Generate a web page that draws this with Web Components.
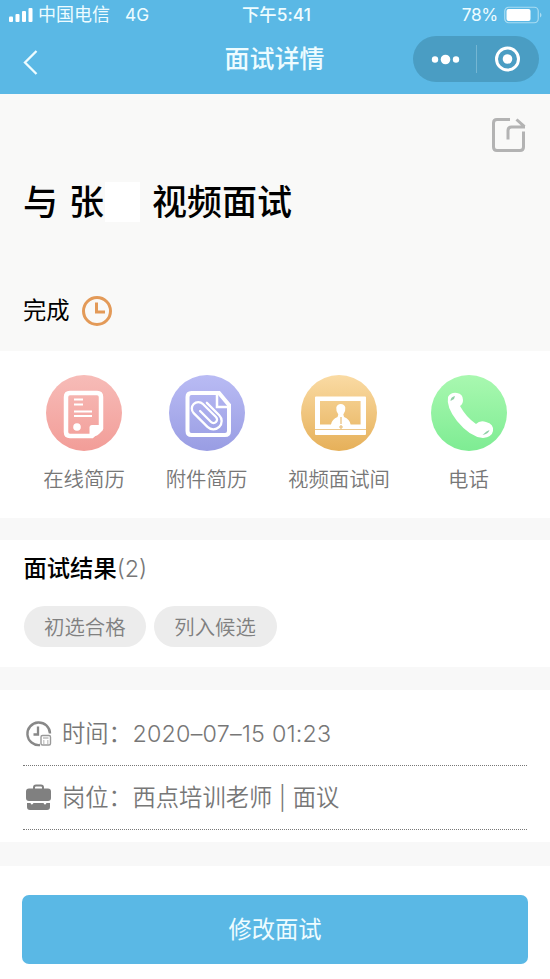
<!DOCTYPE html>
<html lang="zh-CN">
<head>
<meta charset="utf-8">
<title>面试详情</title>
<style>
html,body{margin:0;padding:0}
body{width:550px;height:979px;overflow:hidden;background:#fff;font-family:Inter,"Noto Sans CJK SC",sans-serif;color:#000}
</style>
</head>
<body>
<interview-page></interview-page>
<script>
function define(name, html) {
  const t = document.createElement('template');
  t.innerHTML = html;
  customElements.define(name, class extends HTMLElement {
    constructor() {
      super();
      this.attachShadow({mode: 'open'}).append(t.content.cloneNode(true));
    }
  });
}

define('status-bar', `
<style>
:host{display:grid;grid-template-columns:1fr auto 1fr;align-items:center;height:30px;padding:0 8px 0 8px;color:#eefcff;font-size:17.3px;line-height:30px;box-sizing:border-box}
svg{display:block}
.l,.r{display:flex;align-items:center}
.r{justify-content:flex-end;gap:6px}
.l span:nth-of-type(1){margin-left:5px;font-size:18px}
.l span:nth-of-type(2){margin-left:15px}
.r span{letter-spacing:-.3px}
.c{font-weight:500;padding-left:3px;letter-spacing:0.1px}
</style>
<div class="l">
<svg width="25" height="16" viewBox="0 0 25 16" fill="#fff"><rect x="1" y="9.500" width="4" height="5.500" rx="1"/><rect x="7.500" y="7" width="4" height="8" rx="1"/><rect x="14" y="4" width="4" height="11" rx="1"/><rect x="20.500" y="1" width="4" height="14" rx="1"/></svg>
<span>中国电信</span><span>4G</span></div>
<div class="c">下午5:41</div>
<div class="r"><span>78%</span>
<svg width="38" height="18" viewBox="0 0 38 18"><rect x=".75" y="1.250" width="33.500" height="15.500" rx="4" fill="none" stroke="#a9dcf2" stroke-width="1.200"/><rect x="2.500" y="3" width="24" height="12" rx="2" fill="#fff"/><path d="M36 6.500v5q1.500-1 1.500-2.500t-1.500-2.500" fill="#a9dcf2"/></svg></div>`);

define('nav-bar', `
<style>
:host{display:grid;grid-template-columns:1fr auto 1fr;align-items:center;height:64px;padding:0 11px 0 21px;color:#eefcff;box-sizing:border-box}
svg{display:block}
h1{margin:0;font-size:25px;line-height:36px;font-weight:500;padding-bottom:6px;margin-right:11px}
.back{margin-top:-1px}
.cap{justify-self:end;margin-top:-6px;width:126px;height:46px;border-radius:23px;background:#4a9dc3}
</style>
<svg class="back" width="20" height="28" viewBox="0 0 20 28"><path d="M15.500 3 4 14.500 15.500 26" fill="none" stroke="#eefcff" stroke-width="2.300"/></svg>
<h1><slot></slot></h1>
<div class="cap"><svg width="126" height="46" viewBox="0 0 126 46" fill="#fff"><circle cx="22" cy="23.500" r="3.200"/><circle cx="32.500" cy="23.500" r="4.800"/><circle cx="43" cy="23.500" r="3.200"/><path d="M63.500 9v28" stroke="#74b6d3"/><circle cx="94.500" cy="23" r="11" fill="none" stroke="#fff" stroke-width="3"/><circle cx="94.500" cy="23" r="4.800"/></svg></div>`);

define('interview-summary', `
<style>
:host{display:flex;flex-direction:column;height:257px;background:#f9f9f8;box-sizing:border-box;padding:22px 23px 0}
svg{display:block}
.share{align-self:flex-end}
.head{display:flex;align-items:center;height:50px;margin-top:23px;font-size:35px;font-weight:500;line-height:50px}
.mask{width:35px;height:40px;background:#fff;margin-right:12px;margin-left:1px}
.gap{width:11px}
.state{display:flex;align-items:center;gap:11px;margin-top:66px;height:36px;font-size:23.300px;line-height:36px}
</style>
<svg class="share" width="38" height="38" viewBox="0 0 38 38" fill="none" stroke="#b3b3b3" stroke-width="3"><path d="M21 3.500H8Q4.500 3.500 4.500 7v24q0 3.500 3.500 3.500h23q3.500 0 3.500-3.500V15.500M19 23.500v-9q0-3.500 3.500-3.500H36M27.500 3.500l8 7.200"/></svg>
<div class="head"><span>与</span><span class="gap"></span><span>张</span><span class="mask"></span><span>视频面试</span></div>
<div class="state"><span>完成</span><svg width="32" height="32" viewBox="0 0 32 32" fill="none"><circle cx="16" cy="16" r="13.500" stroke="#e39a58" stroke-width="3"/><path d="M15.500 7.500v9.500h8.500" stroke="#e39a58" stroke-width="3"/></svg></div>`);

define('quick-action', `
<style>
:host{display:flex;flex-direction:column;align-items:center;color:#777;font-size:20.400px;line-height:30px;font-weight:350}
.disc{width:76px;height:76px;border-radius:50%;background:var(--disc)}
.label{margin-top:14px;white-space:nowrap}
</style>
<div class="disc"><slot name="icon"></slot></div><div class="label"><slot></slot></div>`);

define('quick-actions', `
<style>
:host{display:grid;grid-template-columns:122px 123px 142px 117px;height:167px;box-sizing:border-box;padding:23.500px 23px 0;background:#fff}
svg{display:block}
</style>
<quick-action style="--disc:linear-gradient(#f7bcb8,#f29d98)"><svg slot="icon" width="76" height="76" viewBox="0 0 76 76"><path d="M24 18h27q4 0 4 4v31l-9 8H24q-4 0-4-4V22q0-4 4-4Z" fill="none" stroke="#fff" stroke-width="4.500"/><path d="M55 50h-9q-2.500 0-2.500 2.500v8.500h5.500q2 0 4-2t4-4Z" fill="#fff"/><path d="M28 24.500h9M28 29.500h9M28 36.500h18M28 41h18" stroke="#fff" stroke-width="2"/><circle cx="31" cy="52" r="3.800" fill="#fff"/></svg>在线简历</quick-action>
<quick-action style="--disc:linear-gradient(#b9bbf4,#999de3)"><svg slot="icon" width="76" height="76" viewBox="0 0 76 76" fill="none" stroke="#fff"><path d="M22.500 18H50l10 12v26q0 4-4 4H22.500q-4 0-4-4V22q0-4 4-4Z" stroke-width="4"/><path d="M48 18v14h12" stroke-width="2.500"/><path transform="translate(38.500 38.500) rotate(-45)" d="M-3.500-7V8.500a3.500 3.500 0 0 0 7 0V-10a6.500 6.500 0 0 0-13 0V9.500a8.300 8.300 0 0 0 16.600 0V-8" stroke-width="2.300" stroke-linecap="round"/></svg>附件简历</quick-action>
<quick-action style="--disc:linear-gradient(#fadba4,#e6b059)"><svg slot="icon" width="76" height="76" viewBox="0 0 76 76"><path fill-rule="evenodd" d="M15 21.500h49q1 0 1 1V59q0 1-1 1H15q-1 0-1-1V22.500q0-1 1-1ZM19 26v23.500h11q1-5.500 6.500-7.500l.8-2.500q-2.500-3-2-7 .8-3.500 4.500-3.500t4.500 3.500q.5 4-2 7l.8 2.500q5.500 2 6.500 7.500h10V26Z" fill="#fff"/><path d="M14 54.500h51" stroke="#edc98d"/><path d="M40 42v7M38 52h4M40 50v4" stroke="#e8bd76" stroke-width="1.200"/></svg>视频面试间</quick-action>
<quick-action style="--disc:linear-gradient(#a9f8b0,#7eec93)"><svg slot="icon" width="76" height="76" viewBox="0 0 76 76"><path d="M17 22Q20 17 26 18q6 1 6 7 0 4-3 6 6 11 16 18 4-4 10-2 8 2 7 9-1 6-10 7-13-1-26-17Q15 32 17 22Z" fill="#fff"/><path d="M19.500 26q0-4 4.500-5l-1 3ZM51.500 60l4-3.500 3-1.500q-1 4-7 5Z" fill="#8ecfa5"/></svg>电话</quick-action>`);

define('result-tag', `
<style>:host{display:flex;align-items:center;height:41px;box-sizing:border-box;padding:0 20.600px;border-radius:21px;background:#ececec;color:#808080;font-size:20.400px;font-weight:350;line-height:41px}span{padding-top:1px}</style><span><slot></slot></span>`);

define('interview-result', `
<style>
:host{display:block;height:127px;box-sizing:border-box;padding:11px 23.500px 0;background:#fff}
.h{font-size:23.300px;line-height:36px;font-weight:500}
.n{font-weight:300;color:#777}
.tags{display:flex;gap:7.500px;margin-top:19px}
</style>
<div class="h">面试结果<span class="n">(2)</span></div>
<div class="tags"><result-tag>初选合格</result-tag><result-tag>列入候选</result-tag></div>`);

define('info-row', `
<style>
:host{display:flex;align-items:center;height:64px;box-sizing:border-box;border-bottom:1.500px dotted #777;color:#777;font-size:23.300px;font-weight:350;line-height:36px;white-space:pre}
.k{width:70.500px}
::slotted(svg){display:block;margin:0 9px 0 2px}
</style>
<slot name="icon"></slot><span class="k"><slot name="key"></slot></span><slot></slot>`);

define('interview-info', `
<style>:host{display:block;height:152px;box-sizing:border-box;padding:12px 23px 0;background:#fff}.d{letter-spacing:.2px}</style>
<info-row><svg slot="icon" width="28" height="28" viewBox="0 0 28 28" fill="none" stroke="#888"><path d="M15 25A11.300 11.300 0 1 1 25 13.500" stroke-width="2.400"/><path d="M13 6.500v8H8.500" stroke-width="2.300"/><rect x="16" y="15.500" width="9.500" height="9.500" rx="1.500" stroke-width="1.400" stroke="#999"/><path d="M18 18h5.500M18 21h1.500M22 21h1.500M18 23h1.500M22 23h1.500" stroke-width="1" stroke="#999"/></svg><span slot="key">时间：</span><span class="d">2020–07–15 01:23</span></info-row>
<info-row><svg slot="icon" width="28" height="28" viewBox="0 0 28 28"><path d="M9 6V3.500Q9 1.500 11 1.500h5q2 0 2 2V6" fill="none" stroke="#808080" stroke-width="2"/><path d="M4 4.500h19q3 0 3 3v6.500q0 3-3 3H4q-3 0-3-3V7.500q0-3 3-3ZM2 19h3.500q1 3 3 0h10q1.500 3 3 0H25v4q0 3-3 3H5q-3 0-3-3Z" fill="#808080"/></svg><span slot="key">岗位：</span><span>西点培训老师 | 面议</span></info-row>`);

define('primary-button', `
<style>:host{display:block}button{display:block;width:100%;height:69px;border:0;border-radius:7px;padding:0;background:#5ab8e5;color:#eefcff;font:400 23.300px/69px Inter,"Noto Sans CJK SC",sans-serif}</style><button><slot></slot></button>`);

define('interview-page', `
<style>
:host{display:flex;flex-direction:column;width:550px;height:979px}
header{height:94px;background:#5ab8e5}
.gap{background:#f8f8f8}
footer{padding:29px 22px 0}
</style>
<header><status-bar></status-bar><nav-bar>面试详情</nav-bar></header>
<interview-summary></interview-summary>
<quick-actions></quick-actions>
<div class="gap" style="height:22px"></div>
<interview-result></interview-result>
<div class="gap" style="height:23px"></div>
<interview-info></interview-info>
<div class="gap" style="height:24px"></div>
<footer><primary-button>修改面试</primary-button></footer>`);
</script>
</body>
</html>
